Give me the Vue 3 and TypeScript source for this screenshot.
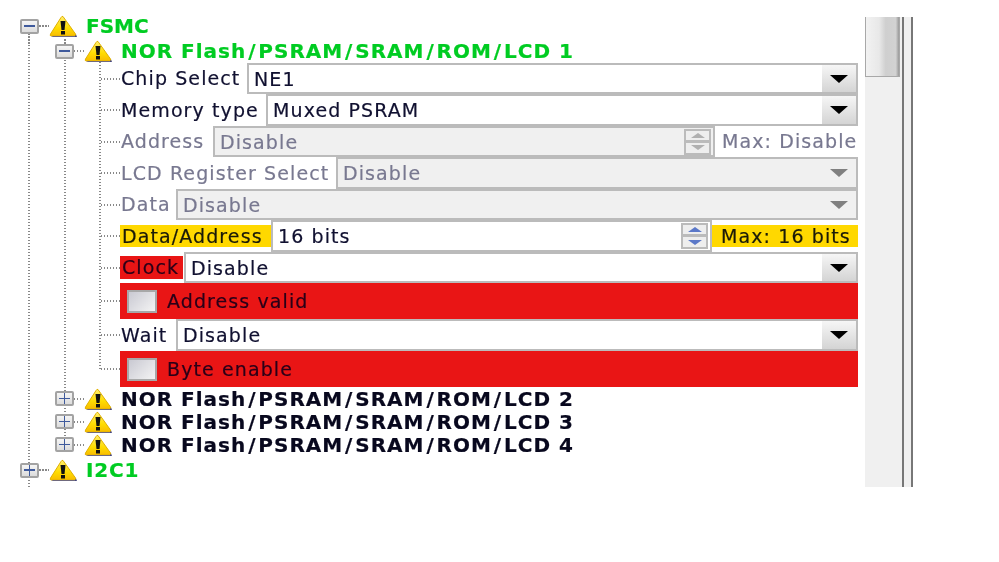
<script setup lang="ts">
type Row = {
  kind: 'select' | 'spin' | 'check'
  label: string
  value?: string
  h: number
  w: number
  disabled?: boolean
  tone?: 'warn' | 'err'
  max?: string
}
const rows: Row[] = [
  { kind: 'select', label: 'Chip Select', value: 'NE1', h: 31, w: 127 },
  { kind: 'select', label: 'Memory type', value: 'Muxed PSRAM', h: 32, w: 146 },
  { kind: 'spin', label: 'Address', value: 'Disable', h: 31, w: 93, disabled: true, max: 'Max: Disable' },
  { kind: 'select', label: 'LCD Register Select', value: 'Disable', h: 32, w: 216, disabled: true },
  { kind: 'select', label: 'Data', value: 'Disable', h: 31, w: 56, disabled: true },
  { kind: 'spin', label: 'Data/Address', value: '16 bits', h: 32, w: 151, tone: 'warn', max: 'Max: 16 bits' },
  { kind: 'select', label: 'Clock', value: 'Disable', h: 31, w: 64, tone: 'err' },
  { kind: 'check', label: 'Address valid', h: 36, w: 0 },
  { kind: 'select', label: 'Wait', value: 'Disable', h: 32, w: 56 },
  { kind: 'check', label: 'Byte enable', h: 36, w: 0 }
]
const nor = ['NOR Flash', 'PSRAM', 'SRAM', 'ROM', 'LCD ']
const siblings = ['2', '3', '4']
</script>

<template>
  <div class="page">
    <div class="tree">
      <i class="vline v1"></i>
      <i class="vline v2"></i>
      <i class="vline v3"></i>

      <div class="node l0">
        <span class="exp"></span><i class="hdot short"></i>
        <svg class="warn" viewBox="0 0 28 22"><defs><linearGradient id="wg" x1="0" y1="0" x2="0" y2="1"><stop offset="0" stop-color="#ffee70"/><stop offset=".6" stop-color="#ffdc00"/><stop offset="1" stop-color="#f8bc00"/></linearGradient></defs><path d="M14 1.500 L26.500 19 Q27.500 21 25.500 21 L2.500 21 Q.5 21 1.500 19 L12 2.500 Q13 .8 14 1.500Z" fill="url(#wg)" stroke="#e0b000"/><path d="M2 21.200 H26 L27 19.500 L28 21.900 H4Z" fill="#46467e"/><path d="M11.500 6 H16.500 L15.500 15 H12.500 Z" fill="#111"/><rect x="12" y="16" width="4" height="3.500" fill="#111"/></svg>
        <span class="title green">FSMC</span>
      </div>
      <div class="node l1">
        <span class="exp"></span><i class="hdot short"></i>
        <svg class="warn" viewBox="0 0 28 22"><path d="M14 1.500 L26.500 19 Q27.500 21 25.500 21 L2.500 21 Q.5 21 1.500 19 L12 2.500 Q13 .8 14 1.500Z" fill="url(#wg)" stroke="#e0b000"/><path d="M2 21.200 H26 L27 19.500 L28 21.900 H4Z" fill="#46467e"/><path d="M11.500 6 H16.500 L15.500 15 H12.500 Z" fill="#111"/><rect x="12" y="16" width="4" height="3.500" fill="#111"/></svg>
        <span class="title green long"><template v-for="(p, i) in nor" :key="p"><span v-if="i" class="slash">/</span>{{ p }}</template>1</span>
      </div>

      <div v-for="r in rows" :key="r.label" class="row" :style="{ height: r.h + 'px' }">
        <i class="hdot wide"></i>
        <div v-if="r.kind === 'check'" class="checkrow">
          <span class="box"></span>
          <span class="checklabel">{{ r.label }}</span>
        </div>
        <template v-else>
          <span class="label" :class="[r.tone, { off: r.disabled }]" :style="{ width: r.w + 'px' }">{{ r.label }}</span>
          <div class="field" :class="{ off: r.disabled }">
            <span class="value">{{ r.value }}</span>
            <span v-if="r.kind === 'select'" class="drop"><i class="tri"></i></span>
            <span v-else class="spin">
              <span class="sbtn"><i class="up"></i></span>
              <span class="sbtn"><i class="down"></i></span>
            </span>
          </div>
          <span v-if="r.max" class="max" :class="[r.tone, { off: r.disabled }]">{{ r.max }}</span>
        </template>
      </div>

      <div v-for="s in siblings" :key="s" class="node l1 sib">
        <span class="exp plus"></span><i class="hdot short"></i>
        <svg class="warn" viewBox="0 0 28 22"><path d="M14 1.500 L26.500 19 Q27.500 21 25.500 21 L2.500 21 Q.5 21 1.500 19 L12 2.500 Q13 .8 14 1.500Z" fill="url(#wg)" stroke="#e0b000"/><path d="M2 21.200 H26 L27 19.500 L28 21.900 H4Z" fill="#46467e"/><path d="M11.500 6 H16.500 L15.500 15 H12.500 Z" fill="#111"/><rect x="12" y="16" width="4" height="3.500" fill="#111"/></svg>
        <span class="title long"><template v-for="(p, i) in nor" :key="p"><span v-if="i" class="slash">/</span>{{ p }}</template>{{ s }}</span>
      </div>
      <div class="node l0 last">
        <span class="exp plus"></span><i class="hdot short"></i>
        <svg class="warn" viewBox="0 0 28 22"><path d="M14 1.500 L26.500 19 Q27.500 21 25.500 21 L2.500 21 Q.5 21 1.500 19 L12 2.500 Q13 .8 14 1.500Z" fill="url(#wg)" stroke="#e0b000"/><path d="M2 21.200 H26 L27 19.500 L28 21.900 H4Z" fill="#46467e"/><path d="M11.500 6 H16.500 L15.500 15 H12.500 Z" fill="#111"/><rect x="12" y="16" width="4" height="3.500" fill="#111"/></svg>
        <span class="title green i2c">I2C1</span>
      </div>
    </div>

    <div class="scroll"><div class="thumb"></div></div>
    <div class="edge"></div>
  </div>
</template>

<style>
html, body { background: #fff; }
</style>

<style scoped>
.page {
  width: 999px;
  height: 562px;
  display: flex;
  align-items: flex-start;
  overflow: hidden;
  background: #fff;
  font-family: "DejaVu Sans", sans-serif;
  font-size: 19px;
  letter-spacing: 1.1px;
  color: #101030;
  -webkit-text-stroke: 0.2px currentColor;
  filter: blur(0.5px);
}
.tree {
  position: relative;
  width: 858px;
  height: 487px;
  padding-top: 14px;
  box-sizing: border-box;
  flex: none;
}
.vline {
  position: absolute;
  width: 2px;
  background: repeating-linear-gradient(#888 0 1.5px, transparent 1.5px 3px);
}
.v1 { left: 28px; top: 33px; height: 454px; }
.v2 { left: 64px; top: 39px; height: 405px; }
.v3 { left: 99px; top: 62px; height: 307px; }

.node {
  position: relative;
  display: flex;
  align-items: center;
  height: 24px;
}
.node.l0 { padding-left: 20px; }
.node.l1 { padding-left: 55px; margin-top: 1px; }
.node.sib { height: 23px; margin-top: 0; }
.node.last { height: 28px; }
.exp {
  position: relative;
  width: 19px;
  height: 15px;
  box-sizing: border-box;
  border: 2px solid #a3a3a3;
  border-radius: 2px;
  background: linear-gradient(#f5f5f5, #dcdcdc);
  flex: none;
}
.exp::before {
  content: "";
  position: absolute;
  left: 2px;
  right: 2px;
  top: 4.500px;
  height: 1.500px;
  background: #3f5a9c;
}
.plus::after {
  content: "";
  position: absolute;
  left: 6.800px;
  top: 0;
  bottom: 0;
  width: 1.500px;
  background: #3f5a9c;
}
.hdot {
  display: block;
  height: 2px;
  background: repeating-linear-gradient(90deg, #888 0 1.5px, transparent 1.5px 3px);
  flex: none;
}
.short { width: 10px; }
.wide { width: 19px; }
.warn { width: 28px; height: 22px; flex: none; }
.title {
  margin-left: 9px;
  font-size: 20px;
  font-weight: 700;
  letter-spacing: 0;
  color: #08081e;
  white-space: nowrap;
  line-height: 24px;
}
.long { letter-spacing: 1px; }
.i2c { letter-spacing: 0.8px; }
.slash { margin: 0 1.900px; }
.green { color: #00cc22; }

.row {
  display: flex;
  align-items: center;
  margin-left: 101px;
  width: 757px;
  box-sizing: border-box;
}
.label {
  flex: none;
  box-sizing: border-box;
  padding-left: 1px;
  white-space: nowrap;
  line-height: 23px;
}
.label.off, .max.off, .field.off .value { color: #787890; }
.label.warn, .max.warn { background: #ffd800; color: #1a1a08; padding-left: 2px; }
.label.err { background: #e91515; color: #2a0018; padding-left: 2px; margin-right: 1px; width: 63px !important; }
.field {
  flex: 1;
  min-width: 0;
  height: 100%;
  box-sizing: border-box;
  border: 2px solid #bbb;
  display: flex;
  align-items: center;
  background: #fff;
  padding-left: 5px;
  position: relative;
}
.field.off { background: #f0f0f0; }
.value { flex: 1; white-space: nowrap; }
.drop {
  width: 34px;
  align-self: stretch;
  display: flex;
  align-items: center;
  justify-content: center;
  background: linear-gradient(#f6f6f6, #d4d4d4);
}
.field.off .drop { background: #f0f0f0; }
.tri {
  width: 0;
  height: 0;
  border-left: 9px solid transparent;
  border-right: 9px solid transparent;
  border-top: 8px solid #000;
}
.field.off .tri { border-top-color: #808080; }
.spin {
  width: 27px;
  margin-right: 2px;
  display: flex;
  flex-direction: column;
}
.sbtn {
  height: 13px;
  box-sizing: border-box;
  border: 2px solid #bbb;
  background: #eee;
  display: flex;
  align-items: center;
  justify-content: center;
}
.sbtn + .sbtn { margin-top: -1px; height: 14px; }
.up, .down {
  width: 0;
  height: 0;
  border-left: 7px solid transparent;
  border-right: 7px solid transparent;
}
.up { border-bottom: 5px solid #5b78c8; }
.down { border-top: 5px solid #5b78c8; }
.field.off .up { border-bottom-color: #b0b0b0; }
.field.off .down { border-top-color: #b0b0b0; }
.max {
  flex: none;
  width: 143px;
  box-sizing: border-box;
  padding-left: 7px;
  white-space: nowrap;
  overflow: hidden;
  line-height: 23px;
}
.max.warn { width: 146px; padding-left: 9px; }
.checkrow {
  flex: 1;
  height: 100%;
  display: flex;
  align-items: center;
  background: #e91515;
  color: #2a0018;
  padding-left: 7px;
}
.box {
  width: 30px;
  height: 23px;
  box-sizing: border-box;
  border: 2px solid #a8a8a8;
  background: linear-gradient(135deg, #c9c9d2, #f4f4f4);
  flex: none;
}
.checklabel { margin-left: 10px; white-space: nowrap; }

.scroll {
  width: 37px;
  height: 470px;
  margin: 17px 0 0 7px;
  background: #f0f0f0;
  flex: none;
}
.thumb {
  width: 35px;
  height: 60px;
  box-sizing: border-box;
  border: 1px solid #a8a8a8;
  border-top: 0;
  background: linear-gradient(90deg, #f2f2f2, #e8e8e8 40%, #cfcfcf 60%, #d2d2d2 90%, #999);
}
.edge {
  width: 11px;
  height: 470px;
  margin-top: 17px;
  box-sizing: border-box;
  border-left: 2px solid #777;
  border-right: 2px solid #777;
  background: #f0f0f0;
  flex: none;
}
</style>
